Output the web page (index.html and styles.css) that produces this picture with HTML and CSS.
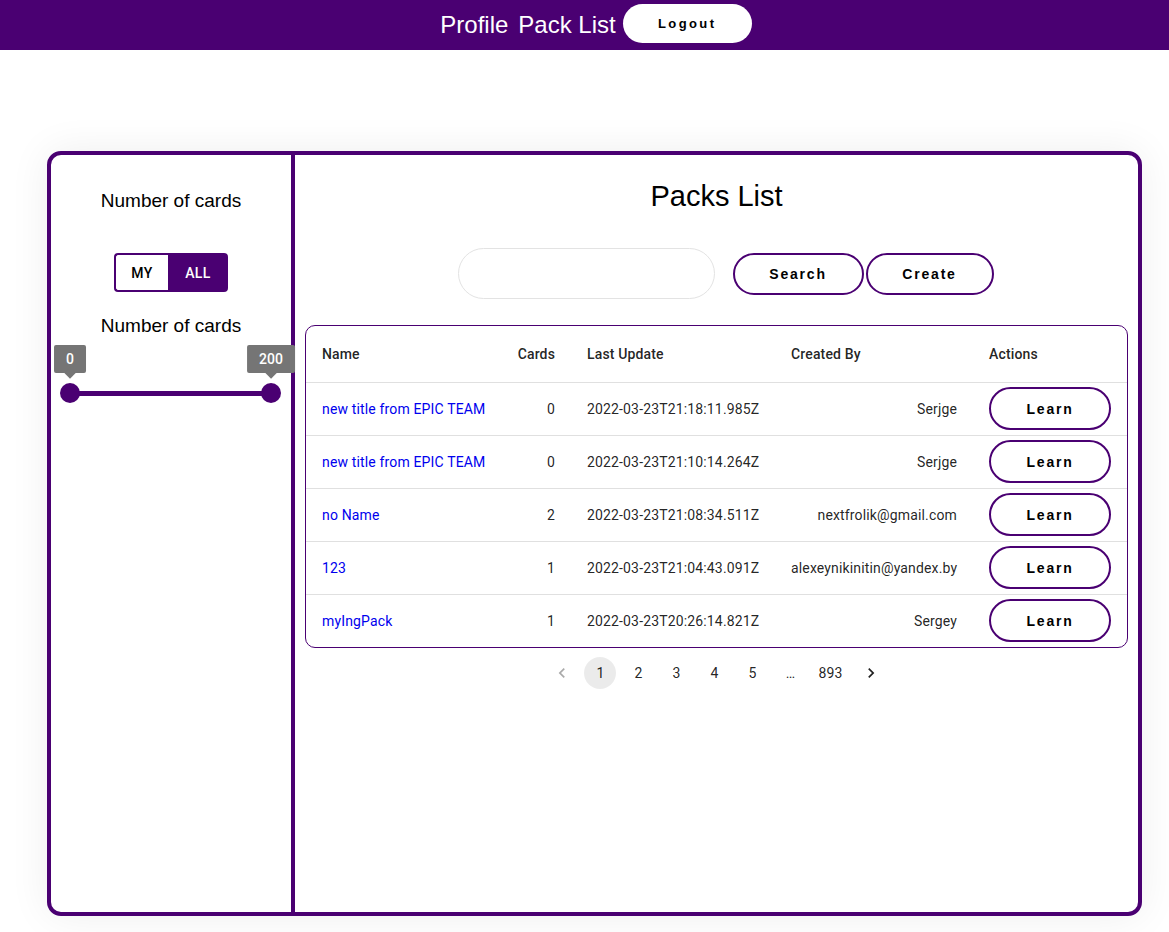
FILE: index.html
```html
<!DOCTYPE html>
<html lang="en">
<head>
<meta charset="utf-8">
<title>Packs List</title>
<link rel="stylesheet" href="styles.css">
</head>
<body>
<header class="topbar">
  <a class="nav-link" href="#">Profile</a>
  <a class="nav-link" href="#">Pack List</a>
  <button class="btn btn-logout">Logout</button>
</header>

<main class="board">
  <aside class="sidebar">
    <h3 class="side-title">Number of cards</h3>
    <div class="toggle">
      <button class="toggle-item">MY</button>
      <button class="toggle-item active">ALL</button>
    </div>
    <h3 class="side-title second">Number of cards</h3>
    <div class="slider">
      <div class="slider-track"></div>
      <div class="thumb thumb-left"><span class="value-label">0</span></div>
      <div class="thumb thumb-right"><span class="value-label">200</span></div>
    </div>
  </aside>

  <section class="content">
    <h1 class="page-title">Packs List</h1>
    <div class="search-row">
      <input class="search-input" type="text">
      <button class="btn btn-outline btn-search">Search</button>
      <button class="btn btn-outline btn-create">Create</button>
    </div>

    <div class="table-wrap">
      <table class="packs">
        <colgroup>
          <col class="c-name"><col class="c-cards"><col class="c-update"><col class="c-by"><col class="c-actions">
        </colgroup>
        <thead>
          <tr>
            <th>Name</th>
            <th class="right">Cards</th>
            <th>Last Update</th>
            <th>Created By</th>
            <th>Actions</th>
          </tr>
        </thead>
        <tbody>
          <tr>
            <td><a class="pack-link" href="#">new title from EPIC TEAM</a></td>
            <td class="right">0</td>
            <td>2022-03-23T21:18:11.985Z</td>
            <td class="right">Serjge</td>
            <td class="action"><button class="btn btn-outline btn-learn">Learn</button></td>
          </tr>
          <tr>
            <td><a class="pack-link" href="#">new title from EPIC TEAM</a></td>
            <td class="right">0</td>
            <td>2022-03-23T21:10:14.264Z</td>
            <td class="right">Serjge</td>
            <td class="action"><button class="btn btn-outline btn-learn">Learn</button></td>
          </tr>
          <tr>
            <td><a class="pack-link" href="#">no Name</a></td>
            <td class="right">2</td>
            <td>2022-03-23T21:08:34.511Z</td>
            <td class="right">nextfrolik@gmail.com</td>
            <td class="action"><button class="btn btn-outline btn-learn">Learn</button></td>
          </tr>
          <tr>
            <td><a class="pack-link" href="#">123</a></td>
            <td class="right">1</td>
            <td>2022-03-23T21:04:43.091Z</td>
            <td class="right">alexeynikinitin@yandex.by</td>
            <td class="action"><button class="btn btn-outline btn-learn">Learn</button></td>
          </tr>
          <tr>
            <td><a class="pack-link" href="#">myIngPack</a></td>
            <td class="right">1</td>
            <td>2022-03-23T20:26:14.821Z</td>
            <td class="right">Sergey</td>
            <td class="action"><button class="btn btn-outline btn-learn">Learn</button></td>
          </tr>
        </tbody>
      </table>
    </div>

    <nav class="pagination">
      <span class="page-item disabled">
        <svg viewBox="0 0 24 24" width="20" height="20"><path d="M15.41 7.41 14 6l-6 6 6 6 1.41-1.41L10.83 12z"/></svg>
      </span>
      <span class="page-item selected">1</span>
      <span class="page-item">2</span>
      <span class="page-item">3</span>
      <span class="page-item">4</span>
      <span class="page-item">5</span>
      <span class="page-item ellipsis">…</span>
      <span class="page-item">893</span>
      <span class="page-item">
        <svg viewBox="0 0 24 24" width="20" height="20"><path d="M10 6 8.59 7.41 13.17 12l-4.58 4.59L10 18l6-6z"/></svg>
      </span>
    </nav>
  </section>
</main>
</body>
</html>
```

FILE: styles.css
```css
* { box-sizing: border-box; }

html, body {
  margin: 0;
  padding: 0;
  background: #ffffff;
}

body {
  font-family: "Liberation Sans", Arial, sans-serif;
  color: #000;
  height: 932px;
  overflow: hidden;
}

/* ---------- top bar ---------- */
.topbar {
  height: 50px;
  background: #4a0072;
  display: flex;
  align-items: center;
  justify-content: center;
  padding-left: 23px;
}

.nav-link {
  color: #fff;
  text-decoration: none;
  font-size: 24px;
  line-height: 28px;
  margin-right: 10px;
}

.nav-link + .nav-link {
  margin-right: 7px;
}

.btn {
  font-family: "Liberation Sans", Arial, sans-serif;
  font-weight: 700;
  font-size: 14px;
  letter-spacing: 1.8px;
  color: #000;
  cursor: pointer;
  padding: 0;
}

.btn-logout {
  width: 129px;
  height: 39px;
  border: none;
  border-radius: 20px;
  background: #fff;
  margin-top: -3px;
  font-size: 13px;
  letter-spacing: 2.4px;
}

/* ---------- board ---------- */
.board {
  margin: 101px 0 0 47px;
  width: 1095px;
  height: 765px;
  border: 4px solid #4a0072;
  border-radius: 14px;
  display: flex;
  background: #fff;
  box-shadow: 0 0 40px rgba(0, 0, 0, 0.07);
}

.sidebar {
  width: 244px;
  flex: none;
  border-right: 4px solid #4a0072;
  display: flex;
  flex-direction: column;
  align-items: center;
  padding-top: 35px;
}

.side-title {
  margin: 0;
  font-weight: 400;
  font-size: 19px;
  line-height: 22px;
  color: #000;
}

.toggle {
  display: flex;
  margin-top: 41px;
  margin-bottom: 23px;
  height: 39px;
}

.toggle-item {
  font-family: Roboto, "Liberation Sans", sans-serif;
  font-weight: 500;
  font-size: 14px;
  letter-spacing: 0.4px;
  border: 2px solid #4a0072;
  background: #fff;
  color: #000;
  padding: 0;
  cursor: pointer;
}

.toggle-item:first-child {
  width: 54px;
  border-radius: 4px 0 0 4px;
  border-right: none;
}

.toggle-item.active {
  width: 60px;
  background: #4a0072;
  color: #fff;
  border-radius: 0 4px 4px 0;
}

/* slider */
.slider {
  position: relative;
  align-self: flex-start;
  width: 201px;
  height: 20px;
  margin-left: 19px;
  margin-top: 46px;
}

.slider-track {
  position: absolute;
  left: 0;
  right: 0;
  top: 7.5px;
  height: 5px;
  background: #4a0072;
  border-radius: 3px;
}

.thumb {
  position: absolute;
  top: 0;
  width: 20px;
  height: 20px;
  margin-left: -10px;
  border-radius: 50%;
  background: #4a0072;
}

.thumb-left { left: 0; }
.thumb-right { left: 100%; }

.value-label {
  position: absolute;
  bottom: 30px;
  left: 50%;
  transform: translateX(-50%);
  height: 28px;
  padding: 0 12px;
  background: #757575;
  color: #fff;
  font-family: Roboto, "Liberation Sans", sans-serif;
  font-weight: 500;
  font-size: 14px;
  line-height: 28px;
  border-radius: 2px;
  white-space: nowrap;
}

.value-label::after {
  content: "";
  position: absolute;
  left: 50%;
  bottom: -4px;
  width: 8px;
  height: 8px;
  background: #757575;
  transform: translateX(-50%) rotate(45deg);
}

/* ---------- content ---------- */
.content {
  flex: 1;
  display: flex;
  flex-direction: column;
  align-items: center;
  padding: 25px 10px 0 10px;
}

.page-title {
  margin: 0;
  font-weight: 400;
  font-size: 29px;
  line-height: 32px;
  color: #000;
}

.search-row {
  display: flex;
  align-items: center;
  margin-top: 36px;
  padding-left: 18px;
}

.search-input {
  width: 257px;
  height: 51px;
  border: 1px solid #e3e3e3;
  border-radius: 26px;
  outline: none;
  margin-right: 18px;
  font-size: 16px;
  padding: 0 20px;
}

.btn-outline {
  border: 2px solid #4a0072;
  background: #fff;
}

.btn-search,
.btn-create {
  height: 42px;
  border-radius: 21px;
}

.btn-search { width: 131px; margin-right: 2px; }
.btn-create { width: 128px; }

/* table */
.table-wrap {
  align-self: stretch;
  margin-top: 26px;
  border: 1px solid #4a0072;
  border-radius: 10px;
  overflow: hidden;
}

.packs {
  width: 100%;
  border-collapse: collapse;
  table-layout: fixed;
  font-family: Roboto, "Liberation Sans", sans-serif;
  font-size: 14px;
  letter-spacing: 0.15px;
  color: rgba(0, 0, 0, 0.87);
}

.c-name { width: 195px; }
.c-cards { width: 70px; }
.c-update { width: 204px; }
.c-by { width: 198px; }
.c-actions { width: 154px; }

.packs th,
.packs td {
  padding: 0 16px;
  text-align: left;
  border-bottom: 1px solid #e0e0e0;
  white-space: nowrap;
}

.packs th {
  height: 56px;
  font-weight: 500;
  line-height: 24px;
}

.packs td {
  height: 53px;
  font-weight: 400;
}

.packs tbody tr:last-child td {
  border-bottom: none;
  height: 53px;
}

.packs .right { text-align: right; }

.pack-link {
  color: #0000ee;
  text-decoration: none;
}

.btn-learn {
  width: 122px;
  height: 43px;
  border-radius: 22px;
  display: block;
  letter-spacing: 1.8px;
}

/* pagination */
.pagination {
  display: flex;
  align-items: center;
  margin-top: 9px;
  font-family: Roboto, "Liberation Sans", sans-serif;
  font-size: 14px;
  letter-spacing: 0.15px;
  color: rgba(0, 0, 0, 0.87);
}

.page-item {
  min-width: 32px;
  height: 32px;
  margin: 0 3px;
  padding: 0 6px;
  border-radius: 16px;
  display: flex;
  align-items: center;
  justify-content: center;
}

.page-item svg { fill: rgba(0, 0, 0, 0.87); }
.page-item.disabled { opacity: 0.38; }
.page-item.selected { background: rgba(0, 0, 0, 0.08); }
.page-item.ellipsis { height: auto; }
```
